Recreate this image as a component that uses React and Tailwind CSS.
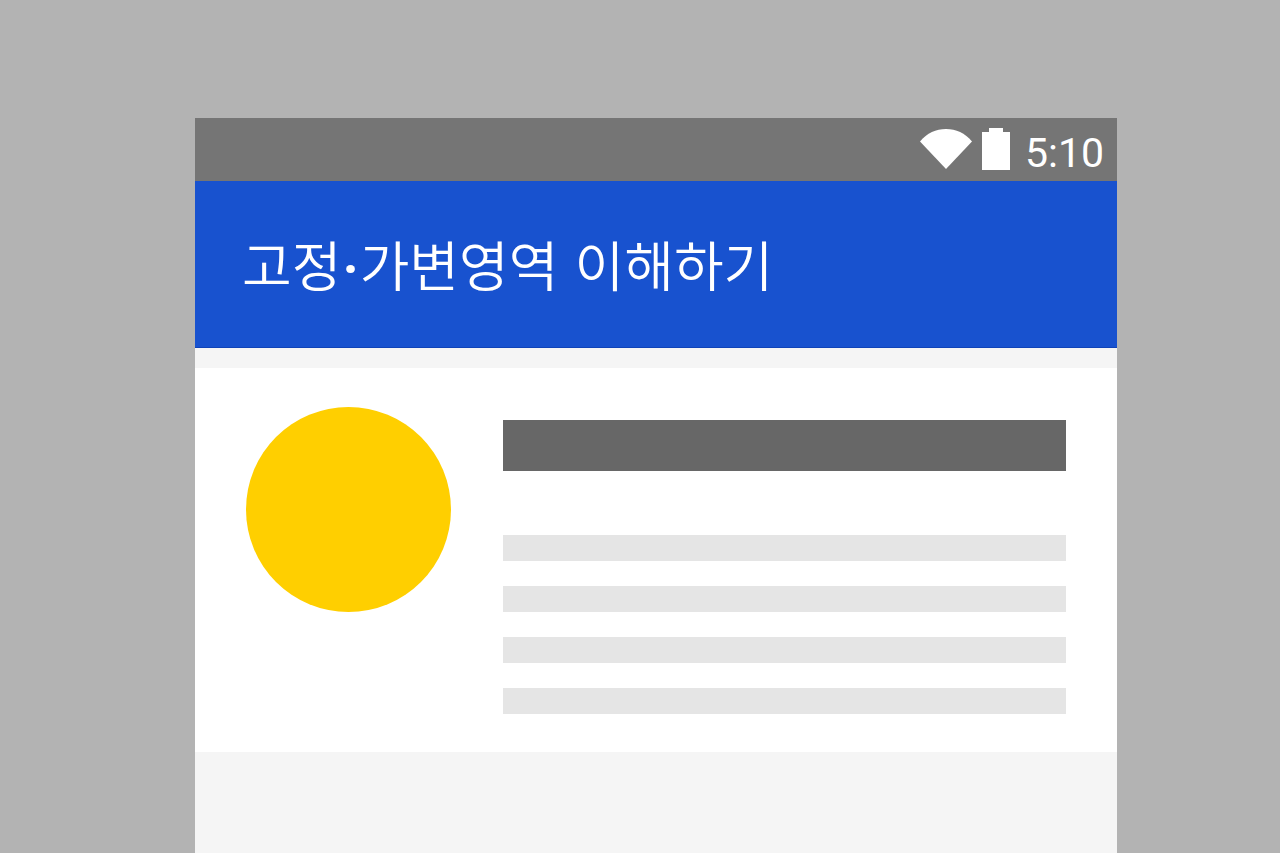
import React from 'react';

const lines = [1, 2, 3, 4];

const App = () => {
  return (
    <div className="h-[853px] overflow-hidden bg-[#b3b3b3] pt-[118px] pl-[195px]">
      <div className="flex h-[735px] w-[922px] flex-col bg-[#f5f5f5]">
        {/* status bar */}
        <div className="flex h-[63px] items-center justify-end bg-[#757575] pr-[13px]">
          <svg width="52" height="42" viewBox="0 0 52 42" className="mt-[-2px]">
            <path d="M0 13.5C7 5 16 1 26 1s19 4 26 12.5L26 41z" fill="#fff" />
          </svg>
          <svg width="28" height="42" viewBox="0 0 28 42" className="ml-[10px] mt-[-1px]">
            <path d="M7 0h14v4h7v38H0V4h7z" fill="#fff" />
          </svg>
          <span className="ml-[15px] mt-[7px] font-['Roboto',sans-serif] text-[41px] font-[450] leading-none text-white">5:10</span>
        </div>

        {/* app bar */}
        <div className="flex h-[167px] items-center border-b border-[#0f43b8] bg-[#1852cf] pl-[47px]">
          <h1 className="mt-[9px] font-['Roboto','Noto_Sans_CJK_KR',sans-serif] text-[54px] font-[350] leading-none [word-spacing:3px] text-white">
            고정<span className="mx-[1px] font-bold">·</span>가변영역 이해하기
          </h1>
        </div>

        {/* card */}
        <div className="mt-5 flex h-[384px] bg-white pl-[51px]">
          <div className="mt-[39px] h-[205px] w-[205px] rounded-full bg-[#ffcf00]" />
          <div className="ml-[52px] mt-[52px] flex w-[563px] flex-col">
            <div className="mb-[64px] h-[51px] bg-[#676767]" />
            <div className="flex flex-col gap-[25px]">
              {lines.map((n) => (
                <div key={n} className="h-[26px] bg-[#e5e5e5]" />
              ))}
            </div>
          </div>
        </div>
      </div>
    </div>
  );
};

export default App;
